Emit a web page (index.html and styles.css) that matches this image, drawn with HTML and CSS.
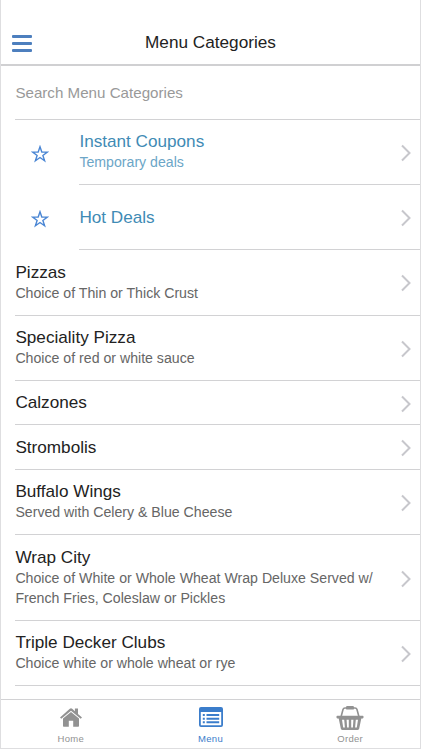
FILE: index.html
```
<!DOCTYPE html>
<html>
<head>
	<meta charset="UTF-8">
	<title>Menu Categories</title>
	<link rel="stylesheet" href="styles.css">
</head>
<body>
	<svg class="defs" width="0" height="0">
		<symbol id="arrow" viewBox="0 0 12 18"><path d="M2 1.500l7.500 7.500L2 16.500"/></symbol>
		<symbol id="star" viewBox="0 0 18 18"><path d="M9 1.800l1.800 5.300h5.600l-4.500 3.300 1.700 5.400L9 12.500l-4.600 3.300 1.700-5.400-4.500-3.300h5.600z"/></symbol>
	</svg>
	<div id="app">
		<header class="navbar">
			<button class="menu-btn"><span></span><span></span><span></span></button>
			<h1>Menu Categories</h1>
		</header>
		<main>
			<div class="search"><input type="text" placeholder="Search Menu Categories"></div>
			<ul class="list">
				<li class="deal">
					<svg class="star"><use href="#star"/></svg>
					<a class="row"><div class="text"><h2>Instant Coupons</h2><p>Temporary deals</p></div><svg class="arrow"><use href="#arrow"/></svg></a>
				</li>
				<li class="deal">
					<svg class="star"><use href="#star"/></svg>
					<a class="row"><div class="text"><h2>Hot Deals</h2></div><svg class="arrow"><use href="#arrow"/></svg></a>
				</li>
				<li><a class="row"><div class="text"><h2>Pizzas</h2><p>Choice of Thin or Thick Crust</p></div><svg class="arrow"><use href="#arrow"/></svg></a></li>
				<li><a class="row"><div class="text"><h2>Speciality Pizza</h2><p>Choice of red or white sauce</p></div><svg class="arrow"><use href="#arrow"/></svg></a></li>
				<li><a class="row"><div class="text"><h2>Calzones</h2></div><svg class="arrow"><use href="#arrow"/></svg></a></li>
				<li><a class="row"><div class="text"><h2>Strombolis</h2></div><svg class="arrow"><use href="#arrow"/></svg></a></li>
				<li><a class="row"><div class="text"><h2>Buffalo Wings</h2><p>Served with Celery &amp; Blue Cheese</p></div><svg class="arrow"><use href="#arrow"/></svg></a></li>
				<li><a class="row"><div class="text"><h2>Wrap City</h2><p>Choice of White or Whole Wheat Wrap Deluxe Served w/<br>French Fries, Coleslaw or Pickles</p></div><svg class="arrow"><use href="#arrow"/></svg></a></li>
				<li><a class="row"><div class="text"><h2>Triple Decker Clubs</h2><p>Choice white or whole wheat or rye</p></div><svg class="arrow"><use href="#arrow"/></svg></a></li>
			</ul>
		</main>
		<nav class="tabbar">
			<a class="tab">
				<svg width="28" height="24" viewBox="0 0 28 24">
					<path d="M14 7l8 6.500v7.200c0 .6-.4 1-1 1h-4.800v-6h-4.400v6H7c-.6 0-1-.4-1-1v-7.200z"/>
					<path d="M3 12.400L12.800 3.800q1.200-1 2.400 0L17.900 6.200V3.500H21v5.400l4 3.500-1.300 1.400L14 5.800l-9.700 8z"/>
				</svg>
				<span>Home</span>
			</a>
			<a class="tab on">
				<svg width="28" height="24" viewBox="0 0 28 24">
					<path fill-rule="evenodd" d="M4 2h20a2 2 0 0 1 2 2v16a2 2 0 0 1-2 2H4a2 2 0 0 1-2-2V4a2 2 0 0 1 2-2zM3.800 7v13.200h20.400V7z"/>
					<path d="M5.800 9h2v2h-2zM9.500 9h12.700v2H9.500zM5.800 12.700h2v2h-2zM9.500 12.700h12.700v2H9.500zM5.800 16.300h2v2h-2zM9.500 16.300h12.700v2H9.500z"/>
				</svg>
				<span>Menu</span>
			</a>
			<a class="tab">
				<svg width="28" height="26" viewBox="0 0 28 26">
					<path class="handle" d="M5 12l2-7.500Q7.400 3 9 3h10q1.600 0 2 1.500l2 7.500"/>
					<rect x="10" y="1" width="8" height="3.600" rx="1.200"/>
					<path d="M1.300 10.800h25.400a.8.8 0 0 1 .8.8v1a.8.8 0 0 1-.8.8H1.300a.8.8 0 0 1-.8-.8v-1a.8.8 0 0 1 .8-.8z"/>
					<path fill-rule="evenodd" d="M2.600 13h22.800l-2.200 10.600c-.2 1-.7 1.400-1.600 1.400H6.400c-.9 0-1.400-.4-1.600-1.400zM6 14.800l1.200 7.700h1.700l-.7-7.700zM10.600 14.800l.5 7.700h1.700v-7.700zM15.200 14.800v7.700h1.700l.5-7.700zM19.800 14.800l-.7 7.700h1.700l1.200-7.700z"/>
				</svg>
				<span>Order</span>
			</a>
		</nav>
	</div>
</body>
</html>
```
FILE: styles.css
```
*{margin: 0;padding: 0;box-sizing: border-box;}
body{background: #fff;font-family: "Liberation Sans",Arial,sans-serif;color: #222;}
.defs{display: block;}
#app{display: flex;flex-direction: column;width: 421px;height: 749px;border: 1px solid #dedee0;border-top: 0;overflow: hidden;}
.navbar{display: grid;grid-template-columns: 44px 1fr 44px;align-items: center;height: 66px;padding-top: 21px;border-bottom: 2px solid #d0d0d2;flex: none;}
.navbar h1{padding-bottom: 2px;font-size: 17.2px;font-weight: normal;line-height: 22px;text-align: center;}
.menu-btn{display: flex;flex-direction: column;gap: 4px;width: 20px;margin: 1px 0 0 11px;border: 0;background: none;}
.menu-btn span{height: 3px;border-radius: 1px;background: #4d7fbe;}
main{flex: 1;min-height: 0;overflow: hidden;}
.search{height: 54px;margin-left: 14.4px;border-bottom: 1px solid #d2d2d4;}
.search input{display: block;width: 100%;height: 53px;border: 0;outline: 0;background: none;font: 15.15px "Liberation Sans",Arial,sans-serif;}
.search input::placeholder{color: #999;}
.list{list-style: none;}
.list li{display: flex;align-items: center;padding-left: 14.4px;}
.row{flex: 1;display: flex;align-items: center;justify-content: space-between;padding: 11.35px 8px 11.35px 0;border-bottom: 1px solid #d2d2d4;}
.text{white-space: nowrap;}
.text h2{font-size: 17.15px;font-weight: normal;line-height: 21px;}
.text p{font-size: 14.15px;line-height: 20.5px;color: #666;}
.arrow{width: 12px;height: 18px;margin-top: 2px;flex: none;fill: none;stroke: #c7c7cc;stroke-width: 2;}
.deal .row{min-height: 65.2px;}
.deal h2{color: #3f8bb5;}
.deal p{color: #6ca6c7;}
.star{width: 18px;height: 18px;margin: 2px 30px 0 16px;fill: none;stroke: #4a86d4;stroke-width: 1.4;}
.tabbar{display: flex;height: 49px;border-top: 1px solid #d2d2d4;background: #fff;flex: none;}
.tab{flex: 1;display: flex;flex-direction: column;align-items: center;justify-content: space-between;padding: 5px 0 3px;color: #929292;font-size: 9.5px;letter-spacing: .3px;line-height: 12px;}
.tab svg{fill: currentColor;}
.tab .handle{fill: none;stroke: currentColor;stroke-width: 1.6;}
.tab.on{color: #3b7dcb;}
```
